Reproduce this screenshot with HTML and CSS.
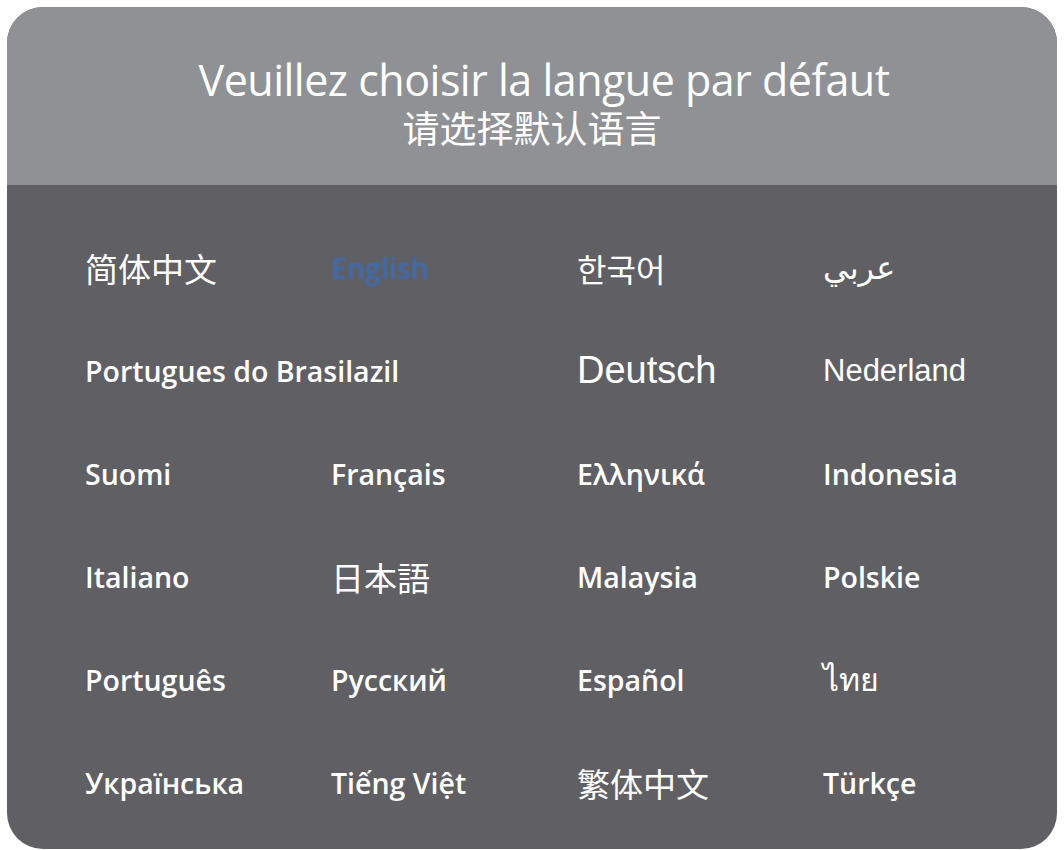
FILE: index.html
```html
<!DOCTYPE html>
<html lang="fr">

<head>
    <meta charset="UTF-8">
    <meta name="viewport" content="width=device-width, initial-scale=1.0">
    <title>Langue par défaut</title>
    <link rel="stylesheet" href="styles.css">
</head>

<body>
    <div class="panel">
        <!-- 标题栏 -->
        <div class="head">
            <p class="title">Veuillez choisir la langue par défaut</p>
            <p class="subtitle">请选择默认语言</p>
        </div>
        <!-- 语言列表，4列 -->
        <ul class="langs">
            <li class="cjk">简体中文</li>
            <li class="active">English</li>
            <li class="kr">한국어</li>
            <li class="ar" lang="ar">عربي</li>

            <li>Portugues do Brasilazil</li>
            <li></li>
            <li class="helv big">Deutsch</li>
            <li class="helv">Nederland</li>

            <li>Suomi</li>
            <li>Français</li>
            <li>Ελληνικά</li>
            <li>Indonesia</li>

            <li>Italiano</li>
            <li class="cjk" lang="ja">日本語</li>
            <li>Malaysia</li>
            <li>Polskie</li>

            <li>Português</li>
            <li>Русский</li>
            <li>Español</li>
            <li class="th" lang="th">ไทย</li>

            <li>Українська</li>
            <li>Tiếng Việt</li>
            <li class="cjk" lang="zh-TW">繁体中文</li>
            <li>Türkçe</li>
        </ul>
    </div>
</body>

</html>
```

FILE: styles.css
```css
body {
    margin: 0;
    background: #fff;
    font-family: "Open Sans", "Noto Sans CJK SC", sans-serif;
}

p {
    margin: 0;
}

.panel {
    margin: 7px;
    height: 842px;
    border-radius: 36px;
    overflow: hidden;
    background: #605f63;
    display: flex;
    flex-direction: column;
}

.head {
    height: 178px;
    background: #8f9194;
    color: #fff;
    text-align: center;
    padding-top: 48px;
    box-sizing: border-box;
}

.head .title {
    font-size: 43px;
    line-height: 50px;
    letter-spacing: -0.5px;
    padding-left: 24px;
}

.head .subtitle {
    font-family: "Noto Sans CJK SC", sans-serif;
    font-size: 37px;
    line-height: 44px;
}

.langs {
    list-style: none;
    margin: 0;
    padding: 31px 0 0 78px;
    display: grid;
    grid-template-columns: repeat(4, 246px);
    grid-auto-rows: 103px;
    align-items: center;
    color: #fff;
    font-size: 28.5px;
    font-weight: 600;
}

.langs li {
    white-space: nowrap;
}

.langs .cjk {
    font-family: "Noto Sans CJK SC", sans-serif;
    font-size: 33px;
    font-weight: 400;
}

.langs .kr {
    font-family: "Noto Sans CJK KR", sans-serif;
    font-size: 32px;
    font-weight: 400;
}

.langs .ar {
    font-family: "DejaVu Sans", sans-serif;
    font-size: 32px;
    font-weight: 400;
}

.langs .th {
    font-family: "Noto Sans", "DejaVu Sans", sans-serif;
    font-size: 32px;
    font-weight: 400;
}

.langs .active {
    color: #3c6db4;
    filter: blur(1px);
}

.langs .helv {
    font-family: "Liberation Sans", sans-serif;
    font-size: 31px;
    font-weight: 400;
}

.langs .big {
    font-size: 38px;
}
```
